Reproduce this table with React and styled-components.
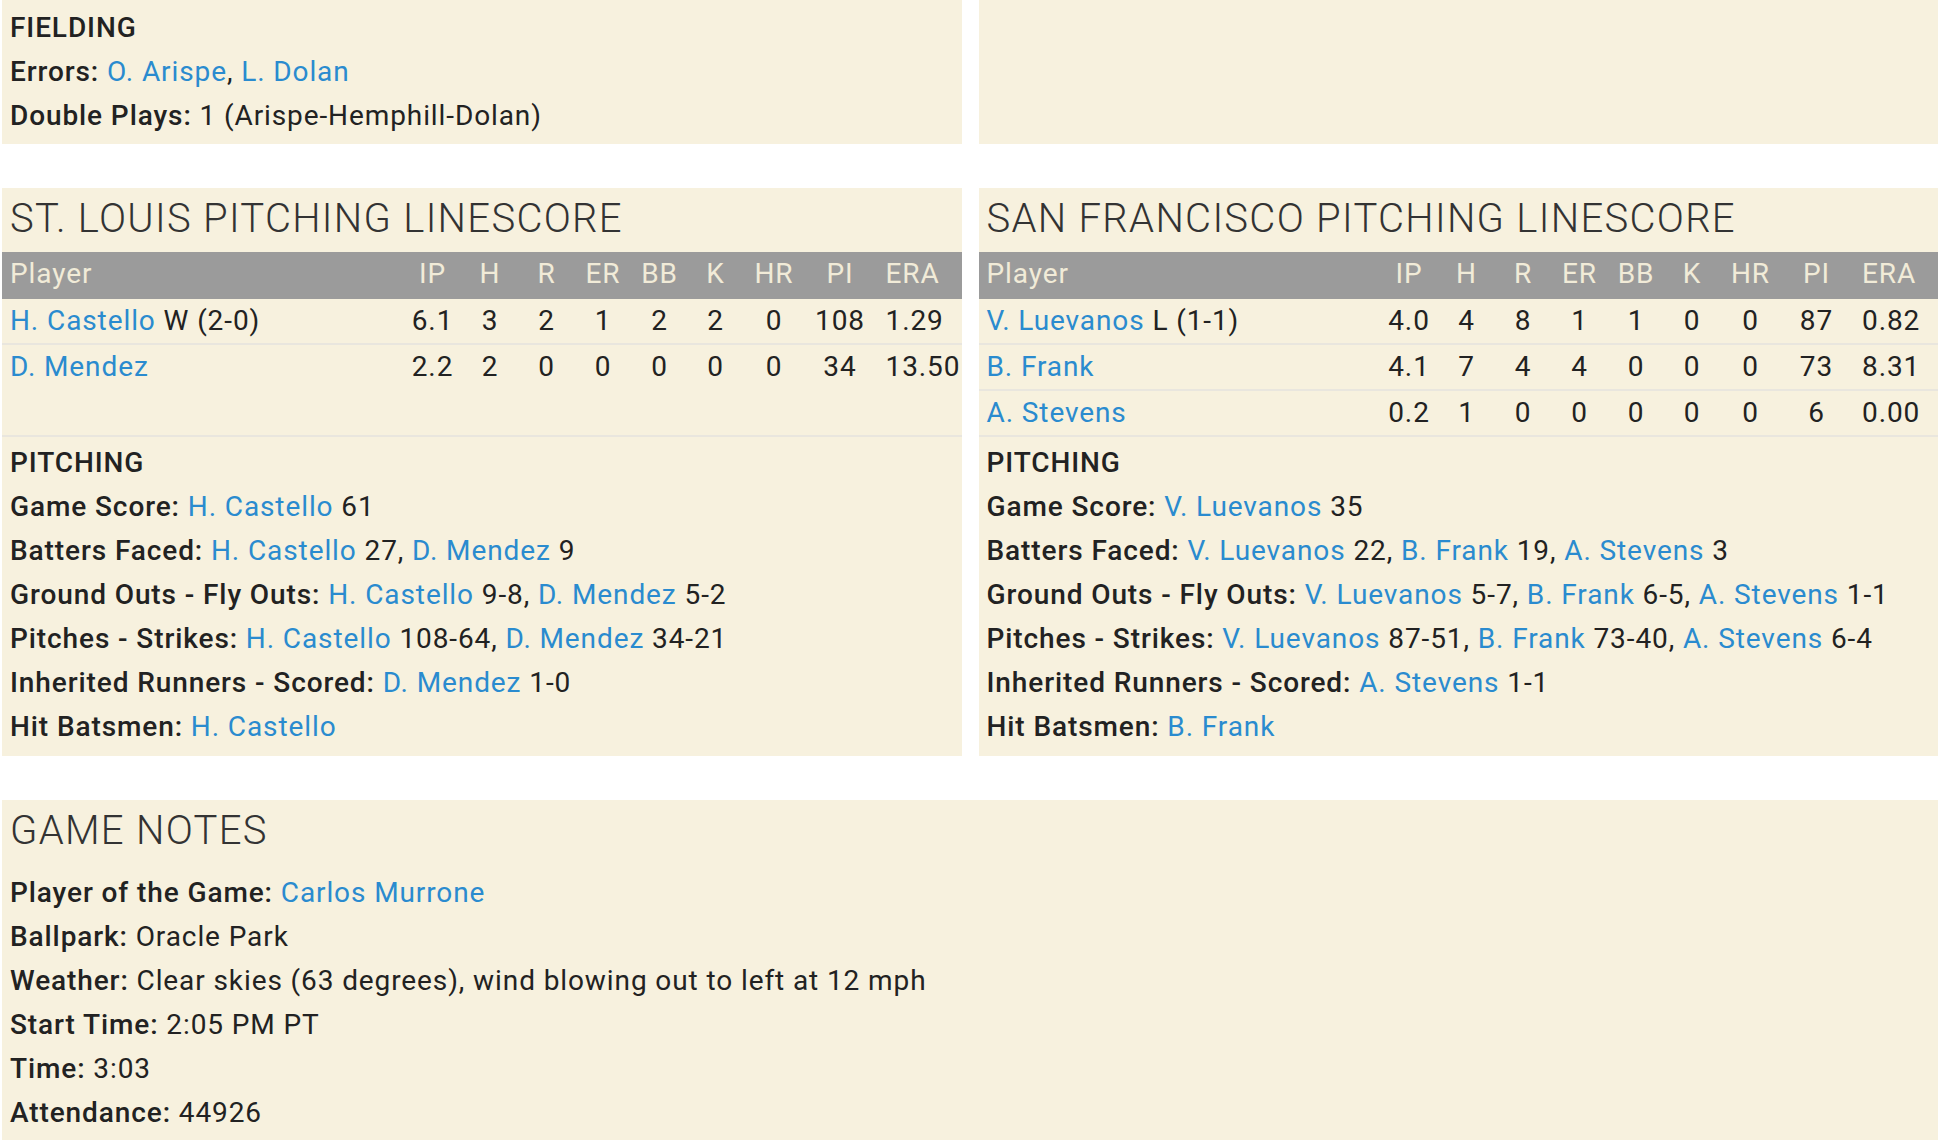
import React from 'react'
import styled, { createGlobalStyle } from 'styled-components'

const GlobalStyle = createGlobalStyle`
  body {
    margin: 0;
    background: #fff;
    font-family: Roboto, "Liberation Sans", sans-serif;
    color: #222;
  }
`

const stLouis = {
    title: 'ST. LOUIS PITCHING LINESCORE',
    rows: [
        { name: 'H. Castello', note: 'W (2-0)', stats: ['6.1', '3', '2', '1', '2', '2', '0', '108', '1.29'] },
        { name: 'D. Mendez', stats: ['2.2', '2', '0', '0', '0', '0', '0', '34', '13.50'] },
    ],
    notes: [
        { label: 'Game Score', items: [['H. Castello', '61']] },
        { label: 'Batters Faced', items: [['H. Castello', '27'], ['D. Mendez', '9']] },
        { label: 'Ground Outs - Fly Outs', items: [['H. Castello', '9-8'], ['D. Mendez', '5-2']] },
        { label: 'Pitches - Strikes', items: [['H. Castello', '108-64'], ['D. Mendez', '34-21']] },
        { label: 'Inherited Runners - Scored', items: [['D. Mendez', '1-0']] },
        { label: 'Hit Batsmen', items: [['H. Castello', '']] },
    ],
}

const sanFran = {
    title: 'SAN FRANCISCO PITCHING LINESCORE',
    rows: [
        { name: 'V. Luevanos', note: 'L (1-1)', stats: ['4.0', '4', '8', '1', '1', '0', '0', '87', '0.82'] },
        { name: 'B. Frank', stats: ['4.1', '7', '4', '4', '0', '0', '0', '73', '8.31'] },
        { name: 'A. Stevens', stats: ['0.2', '1', '0', '0', '0', '0', '0', '6', '0.00'] },
    ],
    notes: [
        { label: 'Game Score', items: [['V. Luevanos', '35']] },
        { label: 'Batters Faced', items: [['V. Luevanos', '22'], ['B. Frank', '19'], ['A. Stevens', '3']] },
        { label: 'Ground Outs - Fly Outs', items: [['V. Luevanos', '5-7'], ['B. Frank', '6-5'], ['A. Stevens', '1-1']] },
        { label: 'Pitches - Strikes', items: [['V. Luevanos', '87-51'], ['B. Frank', '73-40'], ['A. Stevens', '6-4']] },
        { label: 'Inherited Runners - Scored', items: [['A. Stevens', '1-1']] },
        { label: 'Hit Batsmen', items: [['B. Frank', '']] },
    ],
}

const columns = ['IP', 'H', 'R', 'ER', 'BB', 'K', 'HR', 'PI', 'ERA']

const NoteLine = ({ label, items }) => (
    <Line>
        <Label>{label}:</Label>{' '}
        {items.map(([who, val], i) => (
            <React.Fragment key={who}>
                <PlayerLink href="#">{who}</PlayerLink>
                {val && ` ${val}`}
                {i < items.length - 1 && ', '}
            </React.Fragment>
        ))}
    </Line>
)

// last column (ERA) sits from the left of its cell, like an overflowing centered cell
const PitchingPanel = ({ team }) => (
    <Panel>
        <Heading>{team.title}</Heading>
        <StatRow $head>
            <Cell $left>Player</Cell>
            {columns.map((c, i) => <Cell key={c} $last={i === columns.length - 1}>{c}</Cell>)}
        </StatRow>
        <TableBody>
            {team.rows.map(r => (
                <StatRow key={r.name}>
                    <Cell $left>
                        <PlayerLink href="#">{r.name}</PlayerLink>
                        {r.note && ` ${r.note}`}
                    </Cell>
                    {r.stats.map((s, i) => <Cell key={i} $last={i === r.stats.length - 1}>{s}</Cell>)}
                </StatRow>
            ))}
        </TableBody>
        <NotesBlock $kind="divided">
            <Label as="div">PITCHING</Label>
            {team.notes.map(n => <NoteLine key={n.label} {...n} />)}
        </NotesBlock>
    </Panel>
)

const App = () => {
    return (
        <Page>
            <GlobalStyle />
            <Columns>
                <Panel>
                    <NotesBlock $kind="top">
                        <Label as="div">FIELDING</Label>
                        <Line>
                            <Label>Errors:</Label>{' '}
                            <PlayerLink href="#">O. Arispe</PlayerLink>, <PlayerLink href="#">L. Dolan</PlayerLink>
                        </Line>
                        <Line>
                            <Label>Double Plays:</Label> 1 (Arispe-Hemphill-Dolan)
                        </Line>
                    </NotesBlock>
                </Panel>
                <Panel />
            </Columns>
            <Columns>
                <PitchingPanel team={stLouis} />
                <PitchingPanel team={sanFran} />
            </Columns>
            <Panel>
                <Heading $notes>GAME NOTES</Heading>
                <NotesBlock $kind="notes">
                    <Line><Label>Player of the Game:</Label> <PlayerLink href="#">Carlos Murrone</PlayerLink></Line>
                    <Line><Label>Ballpark:</Label> Oracle Park</Line>
                    <Line><Label>Weather:</Label> Clear skies (63 degrees), wind blowing out to left at 12 mph</Line>
                    <Line><Label>Start Time:</Label> 2:05 PM PT</Line>
                    <Line><Label>Time:</Label> 3:03</Line>
                    <Line><Label>Attendance:</Label> 44926</Line>
                </NotesBlock>
            </Panel>
        </Page>
    )
}

const blockPadding = {
    top: '6px 10px 6px 8px',
    divided: '4px 10px 7px 8px',
    notes: '6px 10px 7px 8px',
}

const Page = styled.div`
  display: flex;
  flex-direction: column;
  gap: 44px;
  padding-left: 2px;
  font-size: 28px;
  letter-spacing: 0.9px;
`

const Columns = styled.div`
  display: grid;
  grid-template-columns: 1fr 1fr;
  gap: 17px;
`

const Panel = styled.div`
  background: #f7f1de;
  display: flex;
  flex-direction: column;
  min-height: 40px;
`

const Heading = styled.div`
  font-size: 40px;
  font-weight: 300;
  letter-spacing: 1.3px;
  line-height: 48px;
  color: #333;
  padding: 7px 10px 0 8px;
  margin-bottom: ${p => (p.$notes ? '10px' : '9px')};
`

const StatRow = styled.div`
  box-sizing: border-box;
  display: grid;
  grid-template-columns: 1fr 58px 57px 56px 57px 56px 56px 61px 71px 76px;
  align-items: center;
  height: ${p => (p.$head ? '47px' : '44px')};
  padding: 0 10px ${p => (p.$head ? '4px' : '0')} 8px;
  background: ${p => (p.$head ? '#9b9b9b' : 'transparent')};
  color: ${p => (p.$head ? '#f1ebd8' : '#222')};
  & + & {
    box-sizing: content-box;
    border-top: 2px solid #e9e6de;
  }
`

const TableBody = styled.div`
  min-height: 136px;
`

const Cell = styled.div`
  text-align: ${p => (p.$left || p.$last ? 'left' : 'center')};
  padding-left: ${p => (p.$last ? '10px' : '0')};
  white-space: nowrap;
  line-height: 40px;
`

const NotesBlock = styled.div`
  padding: ${p => blockPadding[p.$kind]};
  border-top: ${p => (p.$kind === 'divided' ? '2px solid #e9e6de' : 'none')};
`

const Line = styled.div`
  line-height: 44px;
  white-space: nowrap;
`

const Label = styled.span`
  font-weight: 500;
  line-height: 44px;
`

const PlayerLink = styled.a`
  color: #2a8bcf;
  text-decoration: none;
`

export default App
